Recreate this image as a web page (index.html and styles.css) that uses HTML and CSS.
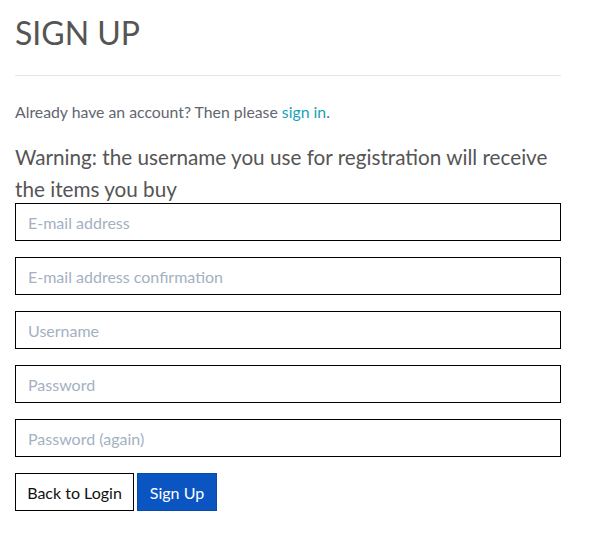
FILE: index.html
```html
<!DOCTYPE html>
<html lang="en">
<head>
<meta charset="utf-8">
<title>Sign Up</title>
<link rel="stylesheet" href="styles.css">
</head>
<body>
<main class="page">
  <h1 class="title">SIGN UP</h1>
  <hr class="rule">
  <p class="intro">Already have an account? Then please <a class="link" href="#">sign in</a>.</p>
  <h3 class="warning">Warning: the username you use for registration will receive the items you buy</h3>
  <form class="form">
    <input class="field" type="email" placeholder="E-mail address">
    <input class="field" type="email" placeholder="E-mail address confirmation">
    <input class="field" type="text" placeholder="Username">
    <input class="field" type="password" placeholder="Password">
    <input class="field" type="password" placeholder="Password (again)">
    <div class="actions">
      <button class="btn btn-secondary" type="button">Back to Login</button>
      <button class="btn btn-primary" type="submit">Sign Up</button>
    </div>
  </form>
</main>
</body>
</html>
```

FILE: styles.css
```css
* { box-sizing: border-box; }
html, body { margin: 0; padding: 0; background: #fff; }
body {
  font-family: Lato, "Open Sans", sans-serif;
  color: #555;
}
.page {
  width: 546px;
  margin: 0 0 0 15px;
  padding-top: 14px;
}
.title {
  margin: 0;
  font-size: 32px;
  line-height: 38px;
  font-weight: 400;
  color: #555;
}
.rule {
  margin: 23px 0 0;
  border: 0;
  border-top: 1px solid #e5e5e5;
  height: 0;
}
.intro {
  margin: 25px 0 0;
  font-size: 15.8px;
  line-height: 22px;
  color: #5f6670;
}
.link { color: #17a2b8; text-decoration: none; }
.warning {
  margin: 18px 0 -2px;
  font-size: 20.7px;
  line-height: 32px;
  font-weight: 400;
  color: #555;
}
.form {
  display: flex;
  flex-direction: column;
  gap: 16px;
  margin-top: 0;
}
.field {
  display: block;
  width: 546px;
  height: 38px;
  border: 1px solid #000;
  border-radius: 0;
  padding: 0 12px;
  font-family: Lato, sans-serif;
  font-size: 16px;
  color: #333;
  outline: none;
  background: #fff;
}
.field::placeholder { color: #a3b1c2; opacity: 1; }
.actions {
  display: flex;
  gap: 3px;
}
.btn {
  height: 38px;
  border-radius: 0;
  font-family: Lato, sans-serif;
  font-size: 16px;
  padding: 0;
  white-space: nowrap;
  cursor: pointer;
}
.btn-secondary {
  width: 119px;
  background: #fff;
  border: 1px solid #000;
  color: #111;
}
.btn-primary {
  width: 80px;
  background: #0b55c3;
  border: 1px solid #0a4aa8;
  color: #fff;
}
```
